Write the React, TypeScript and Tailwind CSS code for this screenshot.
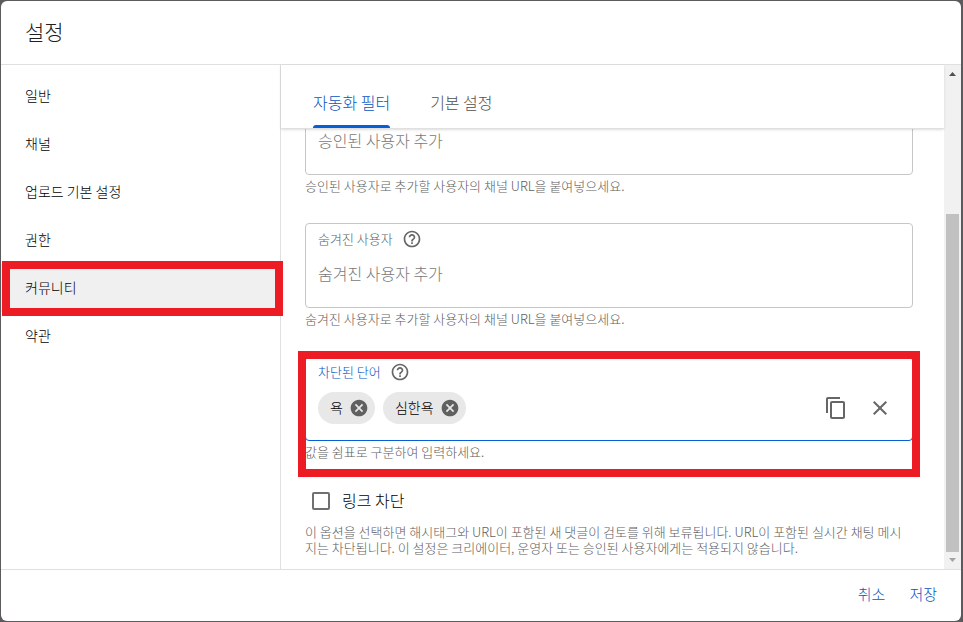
import type { ReactNode } from "react";

const navItems = ["일반", "채널", "업로드 기본 설정", "권한", "커뮤니티", "약관"];
const activeItem = "커뮤니티";

function Icon({ className, d }: { className: string; d: string }) {
  return (
    <svg viewBox="0 0 24 24" className={className} fill="currentColor" aria-hidden="true">
      <path d={d} />
    </svg>
  );
}

const paths = {
  help: "M11 18h2v-2h-2v2zm1-16C6.48 2 2 6.48 2 12s4.48 10 10 10 10-4.48 10-10S17.52 2 12 2zm0 18c-4.41 0-8-3.59-8-8s3.59-8 8-8 8 3.590 8 8-3.590 8-8 8zm0-14c-2.21 0-4 1.790-4 4h2c0-1.100.9-2 2-2s2 .9 2 2c0 2-3 1.750-3 5h2c0-2.250 3-2.500 3-5 0-2.210-1.790-4-4-4z",
  cancel:
    "M12 2C6.47 2 2 6.47 2 12s4.47 10 10 10 10-4.47 10-10S17.53 2 12 2zm5 13.59L15.59 17 12 13.41 8.41 17 7 15.59 10.59 12 7 8.41 8.41 7 12 10.59 15.59 7 17 8.41 13.41 12 17 15.59z",
  copy: "M16 1H4c-1.1 0-2 .9-2 2v14h2V3h12V1zm3 4H8c-1.1 0-2 .9-2 2v14c0 1.1.9 2 2 2h11c1.1 0 2-.9 2-2V7c0-1.1-.9-2-2-2zm0 16H8V7h11v14z",
  close:
    "M19 6.41L17.59 5 12 10.59 6.41 5 5 6.41 10.59 12 5 17.59 6.41 19 12 13.41 17.59 19 19 17.59 13.41 12 19 6.41z",
};

function Field({
  id,
  label,
  helper,
  active = false,
  children,
}: {
  id: string;
  label?: string;
  helper: string;
  active?: boolean;
  children: ReactNode;
}) {
  return (
    <div>
      <div
        className={
          active
            ? "rounded border border-[#065fd4] px-3 pt-[3px] pb-4"
            : "rounded border border-[#c6c6c6] px-3 pt-[3px] pb-4"
        }
      >
        {label && (
          <div className="mb-2 flex h-6 items-center gap-[9px]">
            <label
              htmlFor={id}
              className={active ? "text-[13px] text-[#0556bf]" : "text-[13px] text-[#606060]"}
            >
              {label}
            </label>
            <button type="button" aria-label={label + " 도움말"} className="text-[#666666]">
              <Icon className="size-5" d={paths.help} />
            </button>
          </div>
        )}
        <div className="flex h-8 items-center">{children}</div>
      </div>
      <p className="pt-[3px] pb-px text-[13px] leading-4 text-[#606060]">{helper}</p>
    </div>
  );
}

function Chip({ text }: { text: string }) {
  return (
    <span className="mr-2 flex h-8 shrink-0 items-center gap-1.5 rounded-full bg-[#e8e8e8] pr-1.5 pl-3 text-sm text-black">
      <span className="pb-0.5">{text}</span>
      <button type="button" aria-label={text + " 삭제"} className="text-[#606060]">
        <Icon className="size-5" d={paths.cancel} />
      </button>
    </span>
  );
}

function TextInput({
  id,
  placeholder,
  name,
}: {
  id: string;
  placeholder?: string;
  name?: string;
}) {
  return (
    <input
      id={id}
      type="text"
      aria-label={name}
      placeholder={placeholder}
      className="h-8 min-w-0 flex-1 bg-transparent pb-1 text-base text-black outline-none placeholder:text-[#7a7a7a]"
    />
  );
}

export default function App() {
  return (
    <div className="h-screen bg-[#5c5a5c] py-px pr-0.5 pl-px font-['Noto_Sans_CJK_KR',sans-serif] font-light">
      <div
        role="dialog"
        aria-labelledby="settings-title"
        className="flex h-full flex-col overflow-hidden rounded-md bg-white"
      >
        <header className="flex h-16 shrink-0 items-center border-b border-[#e0e0e0] px-6 pb-0.5">
          <h1 id="settings-title" className="text-[21px] text-[#202020]">
            설정
          </h1>
        </header>

        <div className="flex min-h-0 flex-1">
          <nav className="w-[280px] shrink-0 border-r border-[#e0e0e0] pt-[7px]">
            <ul>
              {navItems.map((item) => (
                <li key={item} className="relative">
                  <a
                    href="#"
                    aria-current={item === activeItem ? "page" : undefined}
                    className={
                      item === activeItem
                        ? "flex h-12 items-center bg-[#f0f0f0] px-6 pb-0.5 text-sm text-black"
                        : "flex h-12 items-center px-6 pb-0.5 text-sm text-black"
                    }
                  >
                    {item}
                  </a>
                  {item === activeItem && (
                    <span className="pointer-events-none absolute -top-[3px] -right-[3px] -bottom-1 left-px z-10 border-8 border-[#ed1c24]" />
                  )}
                </li>
              ))}
            </ul>
          </nav>

          <main className="flex min-w-0 flex-1 flex-col">
            <div
              role="tablist"
              className="z-10 flex h-16 shrink-0 gap-10 border-b border-[#e0e0e0] bg-white px-8 text-base shadow-sm"
            >
              <button
                type="button"
                role="tab"
                aria-selected="true"
                className="relative pt-2.5 text-[#0556bf]"
              >
                자동화 필터
                <span className="absolute inset-x-0 bottom-0 h-[3px] rounded-t-sm bg-[#065fd4]" />
              </button>
              <button type="button" role="tab" aria-selected="false" className="pt-2.5 text-[#505050]">
                기본 설정
              </button>
            </div>

            <div className="flex min-h-0 flex-1 flex-col justify-end overflow-hidden pr-[31px] pb-[13px] pl-6">
              <div className="flex flex-col gap-7">
                <Field
                  id="approved"
                  helper="승인된 사용자로 추가할 사용자의 채널 URL을 붙여넣으세요."
                >
                  <TextInput id="approved" name="승인된 사용자" placeholder="승인된 사용자 추가" />
                </Field>
                <Field
                  id="hidden-users"
                  label="숨겨진 사용자"
                  helper="숨겨진 사용자로 추가할 사용자의 채널 URL을 붙여넣으세요."
                >
                  <TextInput id="hidden-users" placeholder="숨겨진 사용자 추가" />
                </Field>
                <div className="relative">
                  <Field
                    id="blocked"
                    label="차단된 단어"
                    helper="값을 쉼표로 구분하여 입력하세요."
                    active
                  >
                    <Chip text="욕" />
                    <Chip text="심한욕" />
                    <TextInput id="blocked" />
                    <div className="flex gap-5 pr-2 text-[#666666]">
                      <button type="button" aria-label="복사">
                        <Icon className="size-6" d={paths.copy} />
                      </button>
                      <button type="button" aria-label="모두 삭제">
                        <Icon className="size-6" d={paths.close} />
                      </button>
                    </div>
                  </Field>
                  <span className="pointer-events-none absolute -inset-x-[7px] -top-[5px] -bottom-4 border-8 border-[#ed1c24]" />
                </div>
              </div>

              <label className="mt-6 flex h-8 shrink-0 items-center gap-3 pl-[7px] text-base text-black">
                <input
                  type="checkbox"
                  className="size-[18px] appearance-none rounded-xs border-2 border-[#707070] checked:bg-[#065fd4]"
                />
                <span className="pb-0.5">링크 차단</span>
              </label>
              <p className="mt-[7px] text-[13px] leading-4 text-[#606060]">
                이 옵션을 선택하면 해시태그와 URL이 포함된 새 댓글이 검토를 위해 보류됩니다. URL이
                포함된 실시간 채팅 메시지는 차단됩니다. 이 설정은 크리에이터, 운영자 또는 승인된
                사용자에게는 적용되지 않습니다.
              </p>
            </div>
          </main>

          <div
            aria-hidden="true"
            className="flex w-[17px] shrink-0 flex-col items-center bg-[#f1f1f1]"
          >
            <svg viewBox="0 0 17 17" className="size-[17px] shrink-0">
              <path d="M5 11h7L8.5 7z" fill="#505050" />
            </svg>
            <div className="flex min-h-0 w-[13px] flex-1 flex-col justify-end">
              <div className="h-[72%] bg-[#c1c1c1]" />
            </div>
            <svg viewBox="0 0 17 17" className="size-[17px] shrink-0">
              <path d="M5 6h7l-3.5 4z" fill="#a3a3a3" />
            </svg>
          </div>
        </div>

        <footer className="flex h-[52px] shrink-0 items-center justify-end gap-6 border-t border-[#e0e0e0] px-6 pb-0.5 text-[15px] text-[#0556bf]">
          <button type="button">취소</button>
          <button type="button">저장</button>
        </footer>
      </div>
    </div>
  );
}
